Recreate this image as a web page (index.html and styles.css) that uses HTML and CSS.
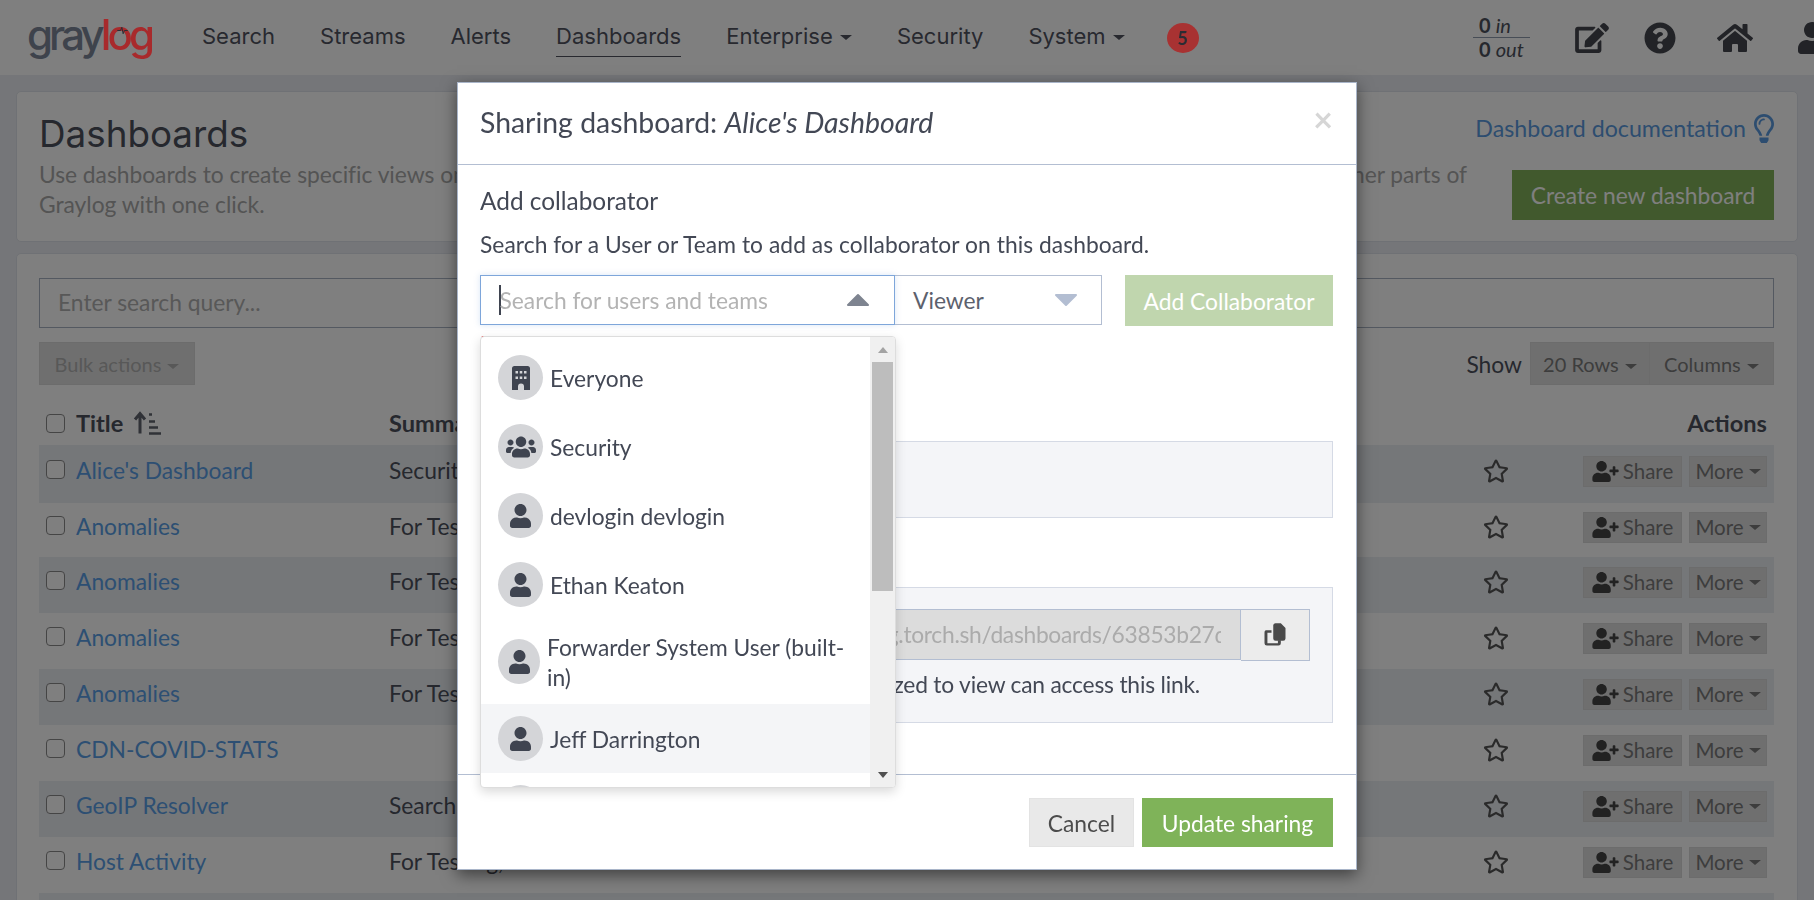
FILE: index.html
```html
<!DOCTYPE html>
<html lang="en">
<head>
    <meta charset="UTF-8">
    <meta name="viewport" content="width=device-width, initial-scale=1.0">
    <title>Graylog - Dashboards</title>
    <link rel="stylesheet" href="styles.css">
</head>
<body>
    <svg class="icon-defs" width="0" height="0">
        <symbol id="i-user" viewBox="0 0 448 512"><path d="M224 256c70.7 0 128-57.3 128-128S294.7 0 224 0 96 57.3 96 128s57.3 128 128 128zm89.6 32h-16.7c-22.2 10.2-46.9 16-72.9 16s-50.6-5.8-72.9-16h-16.7C60.2 288 0 348.2 0 422.4V464c0 26.5 21.5 48 48 48h352c26.5 0 48-21.5 48-48v-41.6c0-74.2-60.2-134.4-134.4-134.4z"/></symbol>
        <symbol id="i-user-plus" viewBox="0 0 640 512"><path d="M624 208h-64v-64c0-8.8-7.2-16-16-16h-32c-8.8 0-16 7.2-16 16v64h-64c-8.8 0-16 7.2-16 16v32c0 8.8 7.2 16 16 16h64v64c0 8.8 7.2 16 16 16h32c8.8 0 16-7.2 16-16v-64h64c8.8 0 16-7.2 16-16v-32c0-8.8-7.2-16-16-16zm-400 48c70.7 0 128-57.3 128-128S294.7 0 224 0 96 57.3 96 128s57.3 128 128 128zm89.6 32h-16.7c-22.2 10.2-46.9 16-72.9 16s-50.6-5.8-72.9-16h-16.7C60.2 288 0 348.2 0 422.4V464c0 26.5 21.5 48 48 48h352c26.5 0 48-21.5 48-48v-41.6c0-74.2-60.2-134.4-134.4-134.4z"/></symbol>
        <symbol id="i-users" viewBox="0 0 640 512"><path d="M96 224c35.3 0 64-28.7 64-64s-28.7-64-64-64-64 28.7-64 64 28.7 64 64 64zm448 0c35.3 0 64-28.7 64-64s-28.7-64-64-64-64 28.7-64 64 28.7 64 64 64zm32 32h-64c-17.6 0-33.5 7.1-45.1 18.6 40.3 22.1 68.9 62 75.1 109.4h66c17.7 0 32-14.3 32-32v-32c0-35.3-28.7-64-64-64zm-256 0c61.9 0 112-50.1 112-112S381.9 32 320 32 208 82.1 208 144s50.1 112 112 112zm76.8 32h-8.3c-20.8 10-43.9 16-68.5 16s-47.6-6-68.5-16h-8.3C179.6 288 128 339.6 128 403.2V432c0 26.5 21.5 48 48 48h288c26.5 0 48-21.5 48-48v-28.8c0-63.6-51.6-115.2-115.2-115.2zm-223.7-13.4C161.5 263.1 145.6 256 128 256H64c-35.3 0-64 28.7-64 64v32c0 17.7 14.3 32 32 32h65.9c6.3-47.4 34.9-87.3 75.2-109.4z"/></symbol>
        <symbol id="i-building" viewBox="0 0 18 24"><path fill-rule="evenodd" d="M2.500 0h13A2.500 2.500 0 0 1 18 2.500V24h-6v-3.500a3 3 0 0 0-6 0V24H0V2.500A2.500 2.500 0 0 1 2.500 0zM3.500 5v2.500H6V5zm4.250 0v2.500h2.500V5zm4.250 0v2.500h2.500V5zM3.500 10.500V13H6v-2.500zm4.250 0V13h2.500v-2.500zm4.250 0V13h2.500v-2.500z"/></symbol>
        <symbol id="i-star" viewBox="0 0 576 512"><path d="M528.1 171.5L382 150.2 316.7 17.8c-11.7-23.6-45.6-23.9-57.4 0L194 150.2 47.9 171.5c-26.2 3.8-36.7 36.1-17.7 54.6l105.7 103-25 145.5c-4.5 26.3 23.2 46 46.4 33.7L288 439.6l130.7 68.7c23.2 12.2 50.9-7.4 46.4-33.7l-25-145.5 105.7-103c19-18.5 8.5-50.8-17.7-54.6zM388.6 312.3l23.7 138.4L288 385.4l-124.3 65.3 23.7-138.4-100.6-98 139-20.2 62.2-126 62.2 126 139 20.2-100.6 98z"/></symbol>
    </svg>

    <header class="navbar">
        <a class="logo">gray<span class="logo-red">l<span class="logo-o">o<svg viewBox="0 0 20 20"><path d="M2 10h5l2-5 2 10 2-5h5"/></svg></span>g</span></a>
        <nav class="nav-links">
            <a>Search</a>
            <a>Streams</a>
            <a>Alerts</a>
            <a class="active">Dashboards</a>
            <a>Enterprise <i class="caret"></i></a>
            <a>Security</a>
            <a>System <i class="caret"></i></a>
        </nav>
        <span class="notif-badge">5</span>
        <div class="nav-right">
            <div class="throughput">
                <div class="tp-row"><b>0</b> <em>in</em></div>
                <div class="tp-row"><b>0</b> <em>out</em></div>
            </div>
            <svg class="nav-icon icon-edit" viewBox="0 0 576 512"><path d="M402.6 83.2l90.2 90.2c3.8 3.8 3.8 10 0 13.8L274.4 405.6l-92.8 10.3c-12.4 1.4-22.9-9.1-21.5-21.5l10.3-92.8L388.8 83.2c3.8-3.8 10-3.8 13.8 0zm162-22.9l-48.8-48.8c-15.2-15.2-39.9-15.2-55.2 0l-35.4 35.4c-3.8 3.8-3.8 10 0 13.8l90.2 90.2c3.8 3.8 10 3.8 13.8 0l35.4-35.4c15.2-15.3 15.2-40 0-55.2zM384 346.2V448H64V128h229.8c3.2 0 6.2-1.3 8.5-3.5l40-40c7.6-7.6 2.2-20.5-8.5-20.5H48C21.5 64 0 85.5 0 112v352c0 26.5 21.5 48 48 48h352c26.5 0 48-21.5 48-48V306.2c0-10.7-12.9-16-20.5-8.5l-40 40c-2.2 2.3-3.5 5.3-3.5 8.5z"/></svg>
            <svg class="nav-icon icon-help" viewBox="0 0 512 512"><path d="M504 256c0 136.997-111.043 248-248 248S8 392.997 8 256C8 119.083 119.043 8 256 8s248 111.083 248 248zM262.655 90c-54.497 0-89.255 22.957-116.549 63.758-3.536 5.286-2.353 12.415 2.715 16.258l34.699 26.31c5.205 3.947 12.621 3.008 16.665-2.122 17.864-22.658 30.113-35.797 57.303-35.797 20.429 0 45.698 13.148 45.698 32.958 0 14.976-12.363 22.667-32.534 33.976C247.128 238.528 216 254.941 216 296v4c0 6.627 5.373 12 12 12h56c6.627 0 12-5.373 12-12v-1.333c0-28.462 83.186-29.647 83.186-106.667 0-58.002-60.165-102-116.531-102zM256 338c-25.365 0-46 20.635-46 46 0 25.364 20.635 46 46 46s46-20.636 46-46c0-25.365-20.635-46-46-46z"/></svg>
            <svg class="nav-icon icon-home" viewBox="0 0 576 512"><path d="M280.37 148.26L96 300.11V464a16 16 0 0 0 16 16l112.06-.29a16 16 0 0 0 15.92-16V368a16 16 0 0 1 16-16h64a16 16 0 0 1 16 16v95.64a16 16 0 0 0 16 16.05L464 480a16 16 0 0 0 16-16V300L295.67 148.26a12.19 12.19 0 0 0-15.3 0zM571.6 251.47L488 182.56V44.05a12 12 0 0 0-12-12h-56a12 12 0 0 0-12 12v72.61L318.47 43a48 48 0 0 0-61 0L4.34 251.47a12 12 0 0 0-1.6 16.9l25.5 31A12 12 0 0 0 45.15 301l235.22-193.74a12.19 12.19 0 0 1 15.3 0L530.9 301a12 12 0 0 0 16.9-1.6l25.5-31a12 12 0 0 0-1.7-16.93z"/></svg>
            <svg class="nav-icon icon-me"><use href="#i-user"/></svg>
        </div>
    </header>

    <main class="content">
        <section class="panel page-head">
            <div class="head-text">
                <h1>Dashboards</h1>
                <p>Use dashboards to create specific views on your messages. Create a new dashboard here and add any graph or chart you create in other parts of<br>Graylog with one click.</p>
            </div>
            <div class="head-side">
                <a class="doc-link">Dashboard documentation
                    <svg viewBox="0 0 352 512"><path d="M176 80c-52.94 0-96 43.06-96 96 0 8.84 7.16 16 16 16s16-7.16 16-16c0-35.3 28.72-64 64-64 8.84 0 16-7.16 16-16s-7.16-16-16-16zM96.06 459.17c0 3.15.93 6.22 2.68 8.84l24.51 36.84c2.97 4.46 7.97 7.14 13.32 7.14h78.85c5.36 0 10.36-2.68 13.32-7.14l24.51-36.84c1.74-2.62 2.67-5.7 2.68-8.84l.05-43.18H96.02l.04 43.18zM176 0C73.72 0 0 82.97 0 176c0 44.37 16.45 84.85 43.56 115.78 16.64 18.99 42.74 58.8 52.42 92.16v.06h48v-.12c-.01-4.77-.72-9.51-2.15-14.07-5.59-17.81-22.82-64.77-62.17-109.67-20.54-23.43-31.52-53.15-31.61-84.14-.2-73.64 59.67-128 127.95-128 70.58 0 128 57.42 128 128 0 30.97-11.24 60.85-31.65 84.14-39.11 44.61-56.42 91.47-62.1 109.46a47.507 47.507 0 0 0-2.22 14.3v.1h48v-.05c9.68-33.37 35.78-73.18 52.42-92.16C335.55 260.85 352 220.37 352 176 352 78.8 273.2 0 176 0z"/></svg>
                </a>
                <button class="btn-create">Create new dashboard</button>
            </div>
        </section>

        <section class="panel list-panel">
            <input class="query-input" type="text" placeholder="Enter search query...">
            <div class="list-tools">
                <button class="btn-tool btn-bulk">Bulk actions <i class="caret"></i></button>
                <div class="tools-right">
                    <span class="show-label">Show</span>
                    <button class="btn-tool btn-rows">20 Rows <i class="caret"></i></button>
                    <button class="btn-tool btn-cols">Columns <i class="caret"></i></button>
                </div>
            </div>

            <div class="table-head">
                <span class="cell-check"><input type="checkbox"></span>
                <span class="cell-title">Title
                    <svg class="sort-icon" viewBox="0 0 28 24"><path d="M7 22V3M2 8l5-6 5 6" fill="none" stroke-width="3"/><path d="M16 3h3M16 10h6M16 16h9M16 22h12" fill="none" stroke-width="2.6"/></svg>
                </span>
                <span class="cell-summary">Summary</span>
                <span class="cell-actions">Actions</span>
            </div>

            <div class="row">
                <span class="cell-check"><input type="checkbox"></span>
                <a class="cell-title">Alice's Dashboard</a>
                <span class="cell-summary">Security</span>
                <svg class="star"><use href="#i-star"/></svg>
                <span class="cell-actions"><button class="btn-row"><svg><use href="#i-user-plus"/></svg> Share</button><button class="btn-row">More <i class="caret"></i></button></span>
            </div>
            <div class="row">
                <span class="cell-check"><input type="checkbox"></span>
                <a class="cell-title">Anomalies</a>
                <span class="cell-summary">For Testing</span>
                <svg class="star"><use href="#i-star"/></svg>
                <span class="cell-actions"><button class="btn-row"><svg><use href="#i-user-plus"/></svg> Share</button><button class="btn-row">More <i class="caret"></i></button></span>
            </div>
            <div class="row">
                <span class="cell-check"><input type="checkbox"></span>
                <a class="cell-title">Anomalies</a>
                <span class="cell-summary">For Testing</span>
                <svg class="star"><use href="#i-star"/></svg>
                <span class="cell-actions"><button class="btn-row"><svg><use href="#i-user-plus"/></svg> Share</button><button class="btn-row">More <i class="caret"></i></button></span>
            </div>
            <div class="row">
                <span class="cell-check"><input type="checkbox"></span>
                <a class="cell-title">Anomalies</a>
                <span class="cell-summary">For Testing</span>
                <svg class="star"><use href="#i-star"/></svg>
                <span class="cell-actions"><button class="btn-row"><svg><use href="#i-user-plus"/></svg> Share</button><button class="btn-row">More <i class="caret"></i></button></span>
            </div>
            <div class="row">
                <span class="cell-check"><input type="checkbox"></span>
                <a class="cell-title">Anomalies</a>
                <span class="cell-summary">For Testing</span>
                <svg class="star"><use href="#i-star"/></svg>
                <span class="cell-actions"><button class="btn-row"><svg><use href="#i-user-plus"/></svg> Share</button><button class="btn-row">More <i class="caret"></i></button></span>
            </div>
            <div class="row">
                <span class="cell-check"><input type="checkbox"></span>
                <a class="cell-title">CDN-COVID-STATS</a>
                <span class="cell-summary"></span>
                <svg class="star"><use href="#i-star"/></svg>
                <span class="cell-actions"><button class="btn-row"><svg><use href="#i-user-plus"/></svg> Share</button><button class="btn-row">More <i class="caret"></i></button></span>
            </div>
            <div class="row">
                <span class="cell-check"><input type="checkbox"></span>
                <a class="cell-title">GeoIP Resolver</a>
                <span class="cell-summary">Search</span>
                <svg class="star"><use href="#i-star"/></svg>
                <span class="cell-actions"><button class="btn-row"><svg><use href="#i-user-plus"/></svg> Share</button><button class="btn-row">More <i class="caret"></i></button></span>
            </div>
            <div class="row">
                <span class="cell-check"><input type="checkbox"></span>
                <a class="cell-title">Host Activity</a>
                <span class="cell-summary">For Testing,</span>
                <svg class="star"><use href="#i-star"/></svg>
                <span class="cell-actions"><button class="btn-row"><svg><use href="#i-user-plus"/></svg> Share</button><button class="btn-row">More <i class="caret"></i></button></span>
            </div>
            <div class="row"></div>
        </section>
    </main>

    <div class="backdrop"></div>

    <div class="modal-wrap">
        <div class="modal">
            <div class="modal-header">
                <h3>Sharing dashboard: <em>Alice's Dashboard</em></h3>
                <span class="modal-close">×</span>
            </div>
            <div class="modal-body">
                <h4>Add collaborator</h4>
                <p class="hint">Search for a User or Team to add as collaborator on this dashboard.</p>
                <div class="add-row">
                    <div class="picker">
                        <div class="picker-input"><i class="text-cursor"></i><span>Search for users and teams</span><svg class="tri tri-up" viewBox="0 0 24 14"><path d="M2 12L12 2l10 10z"/></svg></div>
                        <div class="picker-role"><span>Viewer</span><svg class="tri tri-down" viewBox="0 0 24 14"><path d="M2 2l10 10L22 2z"/></svg></div>
                    </div>
                    <button class="btn-add">Add Collaborator</button>

                    <div class="picker-menu">
                        <ul class="option-list">
                            <li><span class="avatar"><svg class="ico-building"><use href="#i-building"/></svg></span>Everyone</li>
                            <li><span class="avatar"><svg class="ico-users"><use href="#i-users"/></svg></span>Security</li>
                            <li><span class="avatar"><svg><use href="#i-user"/></svg></span>devlogin devlogin</li>
                            <li><span class="avatar"><svg><use href="#i-user"/></svg></span>Ethan Keaton</li>
                            <li class="opt-wrap"><span class="avatar"><svg><use href="#i-user"/></svg></span><span>Forwarder System User (built-in)</span></li>
                            <li class="opt-hover"><span class="avatar"><svg><use href="#i-user"/></svg></span>Jeff Darrington</li>
                            <li><span class="avatar"></span></li>
                        </ul>
                        <div class="menu-scroll">
                            <i class="arrow-up"></i>
                            <i class="thumb"></i>
                            <i class="arrow-down"></i>
                        </div>
                    </div>
                </div>
                <p class="picker-error">Please select a user or team first</p>

                <div class="box box-owners"></div>

                <div class="box box-link">
                    <div class="link-row">
                        <div class="link-input"><div class="link-clip"><span>https://graylog.torch.sh/dashboards/63853b27d</span></div></div>
                        <button class="btn-copy">
                            <svg viewBox="0 0 24 24"><path d="M4 8h5v2H5.500v9h9v-2.500H17V19a2 2 0 0 1-2 2H5a2 2 0 0 1-2-2V10a2 2 0 0 1 1-2z"/><path d="M10.500 3.500A2 2 0 0 1 12.500 2H17l4 4v9a2 2 0 0 1-2 2h-6.500a2 2 0 0 1-2-2z"/></svg>
                        </button>
                    </div>
                    <p class="link-note">Only users who are authorized to view can access this link.</p>
                </div>
            </div>
            <div class="modal-footer">
                <button class="btn-cancel">Cancel</button>
                <button class="btn-update">Update sharing</button>
            </div>
        </div>
    </div>
</body>
</html>
```
FILE: styles.css
```css
* {
    box-sizing: border-box;
}

html, body {
    height: 900px;
    overflow: hidden;
}

body {
    margin: 0;
    background: #eaecf2;
    color: #4c505c;
    font-family: Lato, "Open Sans", sans-serif;
    font-size: 22.8px;
}

button {
    font: inherit;
    cursor: pointer;
}

.icon-defs {
    position: absolute;
}

.caret {
    display: inline-block;
    width: 0;
    height: 0;
    margin-left: 1px;
    vertical-align: middle;
    border-top: 5px solid currentColor;
    border-left: 6px solid transparent;
    border-right: 6px solid transparent;
}

/* top bar */
.navbar {
    display: flex;
    align-items: center;
    height: 75px;
    padding-left: 27px;
    background: #fff;
}

.logo {
    display: flex;
    width: 123px;
    margin-right: 52px;
    color: #7d8699;
    font-family: Inter, sans-serif;
    font-size: 42px;
    font-weight: 500;
    letter-spacing: -3.9px;
    line-height: 40px;
    padding-bottom: 6px;
}

/* the red keeps its strength through the dimming, so these two sit over the backdrop */
.logo-red {
    position: relative;
    z-index: 1;
    color: #a82a2c;
}

.logo-o {
    position: relative;
}

.logo-o svg {
    position: absolute;
    left: 8px;
    top: 15px;
    width: 13px;
    height: 13px;
    fill: none;
    stroke: #2a2c33;
    stroke-width: 1.5;
}

.nav-links {
    display: flex;
    gap: 45px;
    font-family: Inter, sans-serif;
    font-size: 22px;
    color: #50535f;
}

.nav-links a {
    padding: 4px 0 7px;
    border-bottom: 1px solid transparent;
    white-space: nowrap;
}

.nav-links a.active {
    border-bottom-color: #50535f;
}

.notif-badge {
    position: relative;
    z-index: 1;
    display: flex;
    align-items: center;
    justify-content: center;
    width: 32px;
    height: 30px;
    margin-left: 42px;
    border-radius: 50%;
    background: #a83232;
    color: #2a2c33;
    font-size: 18px;
    font-weight: 700;
}

.nav-right {
    display: flex;
    align-items: center;
    margin-left: auto;
    margin-right: -14px;
}

.throughput {
    width: 57px;
    margin-right: 45px;
    padding-bottom: 1px;
    font-size: 20px;
    line-height: 23px;
    color: #4c505c;
}

.tp-row {
    padding-left: 6px;
}

.tp-row:first-child {
    border-bottom: 1px solid #8e9aad;
}

.nav-icon {
    display: block;
    fill: #44474f;
    height: 32px;
}

.icon-edit {
    width: 34px;
    height: 30px;
    margin-right: 35px;
}

.icon-help {
    width: 32px;
    margin-right: 41px;
}

.icon-home {
    width: 36px;
    margin-right: 43px;
}

.icon-me {
    width: 32px;
}

/* page */
.content {
    padding: 16px;
}

.panel {
    background: #fff;
    border: 1px solid #dfe3ea;
    border-radius: 5px;
}

.page-head {
    display: flex;
    justify-content: space-between;
    height: 151px;
    padding: 12px 23px 0 22px;
}

.head-text {
    width: 1440px;
}

h1 {
    margin: 8px 0 0;
    font-family: Inter, sans-serif;
    font-size: 36.8px;
    font-weight: 400;
    line-height: 44px;
    color: #4c505c;
}

.head-text p {
    margin: 3px 0 0;
    line-height: 30px;
    color: #a8a8a8;
    white-space: nowrap;
    letter-spacing: -0.025px;
}

.head-side {
    display: flex;
    flex-direction: column;
    align-items: flex-end;
}

.doc-link {
    display: flex;
    align-items: center;
    gap: 8px;
    height: 36px;
    margin-top: 6px;
    white-space: nowrap;
    color: #5b9be0;
    font-size: 23.2px;
}

.doc-link svg {
    width: 20px;
    height: 31px;
    fill: #5b9be0;
}

.btn-create {
    width: 262px;
    height: 50px;
    margin-top: 24px;
    border: none;
    background: #82b35a;
    color: #fff;
}

.list-panel {
    height: 700px;
    margin-top: 11px;
    padding: 24px 23px 0 22px;
}

.query-input {
    display: block;
    width: 100%;
    height: 50px;
    padding: 0 18px 2px;
    border: 1px solid #a9b3c2;
    background: #fff;
    font: inherit;
}

.query-input::placeholder {
    color: #b0b0b0;
}

.list-tools {
    display: flex;
    justify-content: space-between;
    align-items: center;
    margin-top: 14px;
    height: 43px;
}

.tools-right {
    display: flex;
    align-items: center;
}

.show-label {
    margin-right: 8px;
    color: #4c505c;
}

.btn-tool {
    height: 43px;
    padding: 0;
    border: 1px solid #d8d8d8;
    background: #dfdfdf;
    color: #7a7a7a;
    font-size: 20px;
}

.btn-bulk {
    width: 156px;
    color: #b0b0b0;
}

.btn-rows {
    width: 120px;
}

.btn-cols {
    width: 125px;
    margin-left: -1px;
}

.table-head, .row {
    display: flex;
    align-items: center;
}

.table-head {
    height: 60px;
    font-size: 23.6px;
    font-weight: 700;
    padding-top: 16px;
}

.row {
    height: 56px;
    padding-bottom: 6px;
}

.table-head + .row {
    height: 58px;
}

.table-head + .row + .row {
    height: 54px;
}

.row:nth-of-type(odd) {
    background: #ebeef3;
}

.cell-check {
    display: flex;
    width: 37px;
    padding-left: 7px;
}

.row .cell-check {
    padding-bottom: 3px;
}

.cell-check input {
    appearance: none;
    width: 19px;
    height: 19px;
    margin: 0;
    border: 1px solid #8a8a8a;
    border-radius: 4px;
    background: #fff;
}

.cell-title {
    display: flex;
    align-items: center;
    width: 313px;
    gap: 10px;
}

a.cell-title, .row .cell-summary {
    padding-bottom: 2px;
}

a.cell-title {
    color: #5a9fe6;
}

.sort-icon {
    width: 28px;
    height: 25px;
    stroke: #60646e;
}

.cell-summary {
    flex: 1;
    white-space: nowrap;
}

.cell-actions {
    display: flex;
    justify-content: flex-end;
    gap: 7px;
    width: 210px;
    padding-right: 7px;
}

.star {
    width: 26px;
    height: 24px;
    margin-right: 55px;
    fill: #555;
}

.btn-row {
    display: flex;
    align-items: center;
    justify-content: center;
    height: 31px;
    padding: 0;
    border: 1px solid #d8d8d8;
    background: #dfdfdf;
    color: #7a7a7a;
    font-size: 20.5px;
}

.btn-row:first-child {
    width: 99px;
    gap: 4px;
}

.btn-row:last-child {
    width: 78px;
    gap: 4px;
}

.btn-row svg {
    width: 27px;
    height: 21px;
    fill: #454545;
}

/* dialog */
.backdrop {
    position: fixed;
    inset: 0;
    background: rgba(0, 0, 0, 0.5);
}

.modal-wrap {
    position: fixed;
    inset: 0;
    z-index: 5;
    padding-top: 82px;
}

.modal {
    width: 900px;
    height: 788px;
    margin: 0 auto;
    background: #fff;
    border: 1px solid #a9b5c9;
    box-shadow: 0 5px 15px rgba(0, 0, 0, 0.5);
    color: #434855;
}

.modal-header {
    display: flex;
    justify-content: space-between;
    align-items: center;
    height: 82px;
    padding: 0 23px 4px 22px;
    border-bottom: 1px solid #b3bed2;
}

h3 {
    margin: 0;
    font-size: 28.4px;
    font-weight: 400;
}

.modal-close {
    margin-bottom: 6px;
    color: #d6d6d6;
    font-size: 34px;
    font-weight: 700;
    line-height: 1;
}

.modal-body {
    height: 609px;
    padding: 20px 23px 0 22px;
}

h4 {
    margin: 0;
    font-size: 24.4px;
    font-weight: 400;
    line-height: 32px;
}

.hint {
    margin: 12px 0 0;
    line-height: 30px;
    letter-spacing: 0.05px;
}

.add-row {
    position: relative;
    display: flex;
    justify-content: space-between;
    margin-top: 16px;
}

.picker {
    display: flex;
    width: 622px;
}

.picker-input, .picker-role {
    display: flex;
    align-items: center;
    height: 50px;
    background: #fff;
}

.picker-input {
    position: relative;
    width: 415px;
    padding-left: 18px;
    border: 1px solid #7ea6da;
    box-shadow: 0 0 6px rgba(126, 166, 218, 0.3);
    color: #b3b3b3;
    z-index: 1;
}

.text-cursor {
    width: 1.5px;
    height: 30px;
    margin-right: -1px;
    background: #3f4450;
}

.picker-role {
    width: 207px;
    padding-left: 18px;
    border: 1px solid #b3bed2;
    border-left: none;
    color: #5c616d;
}

.tri {
    width: 24px;
    height: 14px;
    margin-left: auto;
    stroke-width: 2;
    stroke-linejoin: round;
}

.tri-up {
    margin-right: 24px;
    fill: #7e8490;
    stroke: #7e8490;
}

.tri-down {
    margin-right: 23px;
    fill: #b3bed2;
    stroke: #b3bed2;
}

.btn-add {
    width: 208px;
    height: 51px;
    border: none;
    background: #c0d6ae;
    color: #fff;
}

.picker-menu {
    position: absolute;
    left: 0;
    top: 61px;
    display: flex;
    width: 416px;
    height: 452px;
    background: #fff;
    border: 1px solid #ddd;
    border-radius: 4px;
    box-shadow: 0 4px 11px rgba(0, 0, 0, 0.15);
    overflow: hidden;
    z-index: 2;
}

.option-list {
    flex: 1;
    margin: 0;
    padding: 6px 0 0;
    list-style: none;
}

.option-list li {
    display: flex;
    align-items: center;
    gap: 7px;
    height: 69px;
    padding: 0 17px;
}

.option-list .opt-wrap {
    height: 85px;
    line-height: 30px;
}

.option-list .opt-hover {
    background: #f4f5f7;
}

.avatar {
    display: flex;
    align-items: center;
    justify-content: center;
    flex: 0 0 45px;
    height: 45px;
    border-radius: 50%;
    background: #d4d5d8;
}

.opt-wrap .avatar {
    flex-basis: 42px;
}

.avatar svg {
    width: 21px;
    height: 24px;
    fill: #3f4450;
}

.avatar .ico-users {
    width: 30px;
}

.avatar .ico-building {
    width: 18px;
    height: 24px;
}

.menu-scroll {
    display: flex;
    flex-direction: column;
    align-items: center;
    width: 25px;
    padding-top: 10px;
    background: #f0f0f0;
}

.arrow-up, .arrow-down {
    width: 0;
    height: 0;
    border-left: 5px solid transparent;
    border-right: 5px solid transparent;
}

.arrow-up {
    border-bottom: 6px solid #a3a3a3;
}

.arrow-down {
    margin-top: 181px;
    border-top: 6px solid #505050;
}

.thumb {
    width: 21px;
    height: 229px;
    margin-top: 9px;
    background: #bdbdbd;
}

.picker-error {
    height: 34px;
    margin: 6px 0 0;
    color: #e02020;
    font-size: 20px;
    line-height: 20px;
}

.box {
    background: #f4f5f8;
    border: 1px solid #d5dae5;
}

.box-owners {
    height: 77px;
    margin-top: 75px;
}

.box-link {
    height: 136px;
    margin-top: 69px;
    padding: 21px 22px 0;
}

.link-row {
    display: flex;
}

.link-input {
    flex: 1;
    height: 51px;
    padding: 0 19px;
    border: 1px solid #b3bed2;
    background: #dcdcdc;
    color: #ababab;
    line-height: 49px;
}

.link-clip {
    display: flex;
    justify-content: flex-end;
    overflow: hidden;
    white-space: nowrap;
}

.link-clip span {
    margin-right: -6px;
    letter-spacing: -0.3px;
}

.btn-copy {
    display: flex;
    align-items: center;
    justify-content: center;
    width: 69px;
    height: 52px;
    padding: 0;
    border: 1px solid #b3bed2;
    border-left: none;
    background: #ececec;
}

.btn-copy svg {
    width: 28px;
    height: 28px;
    fill: #4a4a4a;
}

.link-note {
    margin: 8px 0 0;
    padding-right: 110px;
    line-height: 30px;
    text-align: right;
    letter-spacing: -0.2px;
}

.modal-footer {
    display: flex;
    justify-content: flex-end;
    gap: 8px;
    height: 94px;
    padding: 23px 23px 0;
    border-top: 1px solid #b3bed2;
}

.btn-cancel {
    width: 105px;
    height: 49px;
    border: 1px solid #e3e3e3;
    background: #e9e9e9;
    color: #4c4c4c;
}

.btn-update {
    width: 191px;
    height: 49px;
    border: none;
    background: #7fb359;
    color: #fff;
}
```
